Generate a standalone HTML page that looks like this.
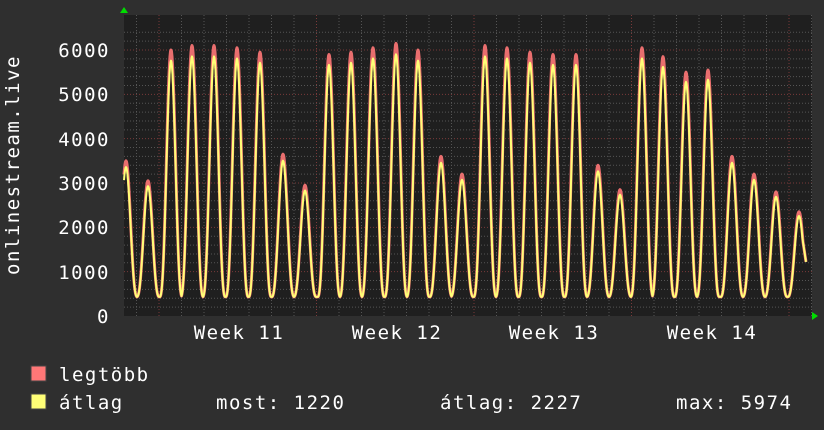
<!DOCTYPE html>
<html><head><meta charset="utf-8"><style>
html,body{margin:0;padding:0;background:#2f2f2f;}
body{width:824px;height:430px;overflow:hidden;position:relative;font-family:"DejaVu Sans Mono","Liberation Mono",monospace;color:#fff;}
text{letter-spacing:1.5px;}
</style></head><body>
<svg id="g" width="824" height="430" xmlns="http://www.w3.org/2000/svg" style="position:absolute;left:0;top:0">
<rect x="0" y="0" width="824" height="430" fill="#2f2f2f"/>
<rect x="124" y="15" width="688" height="301" fill="#1f1f1f"/>
<g id="grid"></g>
<g id="data"></g>
<polygon points="120,13 128,13 124,7" fill="#00dd00"/>
<polygon points="812,312 812,320 818,316" fill="#00dd00"/>
<g font-size="19" fill="#fff" font-family="DejaVu Sans Mono, Liberation Mono, monospace" text-anchor="end">
<text x="110" y="57">6000</text><text x="110" y="101">5000</text><text x="110" y="146">4000</text>
<text x="110" y="190">3000</text><text x="110" y="234">2000</text><text x="110" y="279">1000</text>
<text x="110" y="323">0</text>
</g>
<g font-size="19" fill="#fff" font-family="DejaVu Sans Mono, Liberation Mono, monospace" text-anchor="middle">
<text x="239" y="339">Week 11</text><text x="397" y="339">Week 12</text>
<text x="554" y="339">Week 13</text><text x="712" y="339">Week 14</text>
<text transform="translate(19,165) rotate(-90)">onlinestream.live</text>
</g>
<rect x="31" y="366" width="15" height="15" fill="#ff7777" stroke="#444"/>
<rect x="31" y="394" width="15" height="15" fill="#ffff77" stroke="#444"/>
<g font-size="19" fill="#fff" font-family="DejaVu Sans Mono, Liberation Mono, monospace">
<text x="59" y="381">legtöbb</text>
<text x="59" y="409">átlag</text>
<text x="216" y="409">most: 1220</text>
<text x="440" y="409">átlag: 2227</text>
<text x="676" y="409">max: 5974</text>
</g>
</svg>
<script>
var NS="http://www.w3.org/2000/svg";
function el(t,a,p){var e=document.createElementNS(NS,t);for(var k in a)e.setAttribute(k,a[k]);p.appendChild(e);return e;}
var grid=document.getElementById('grid');
function Y(v){return 316-v*0.04433;}
for(var v=200;v<=6400;v+=200){var y=Y(v);if(y<15)break;
 var major=v%1000==0;
 el('line',{x1:124,x2:812,y1:y,y2:y,stroke:major?'#7a3a3a':'#555','stroke-width':1,'stroke-dasharray':'1,2'},grid);}
for(var x=136.5;x<812;x+=22.5){
 var major=Math.abs(((x-159)%157.5))<1;
 el('line',{x1:x,x2:x,y1:15,y2:316,stroke:major?'#7a3a3a':'#555','stroke-width':1,'stroke-dasharray':'1,2'},grid);}
var pk=[[126,3500],[148,3050],[171,6000],[192,6100],[214,6100],[237,6050],[260,5950],[283,3650],[305,2950],[329,5900],[351,5950],[373,6050],[396,6150],[418,6000],[441,3600],[462,3200],[485,6100],[507,6050],[530,5950],[553,5900],[576,5900],[598,3400],[620,2850],[642,6050],[663,5850],[686,5500],[708,5550],[732,3600],[754,3200],[776,2800],[799,2350]];
function val(x,s){var best=0,mn=430;
 for(var i=0;i<pk.length;i++){var d=x-pk[i][0];if(Math.abs(d)>11.5)continue;
  var f=Math.pow((1+Math.cos(Math.PI*d/11.5))/2,1.4);
  var p=pk[i][1]*s;var v=mn+(p-mn)*f;if(v>best)best=v;}
 return Math.max(best,mn);}
function line(s,col,w,op){var pts=[];for(var x=124;x<=806;x+=0.5){var v=val(x,s);if(x>=800)v=Math.max(v,1220+(806-x)*150);pts.push(x+','+Y(v).toFixed(1));}
 el('polyline',{points:pts.join(' '),fill:'none',stroke:col,'stroke-width':w,opacity:op,'stroke-linejoin':'round'},document.getElementById('data'));}
line(1,'#ff7777',3,0.9);
line(0.96,'#ffff77',2,1);
</script>
</body></html>
